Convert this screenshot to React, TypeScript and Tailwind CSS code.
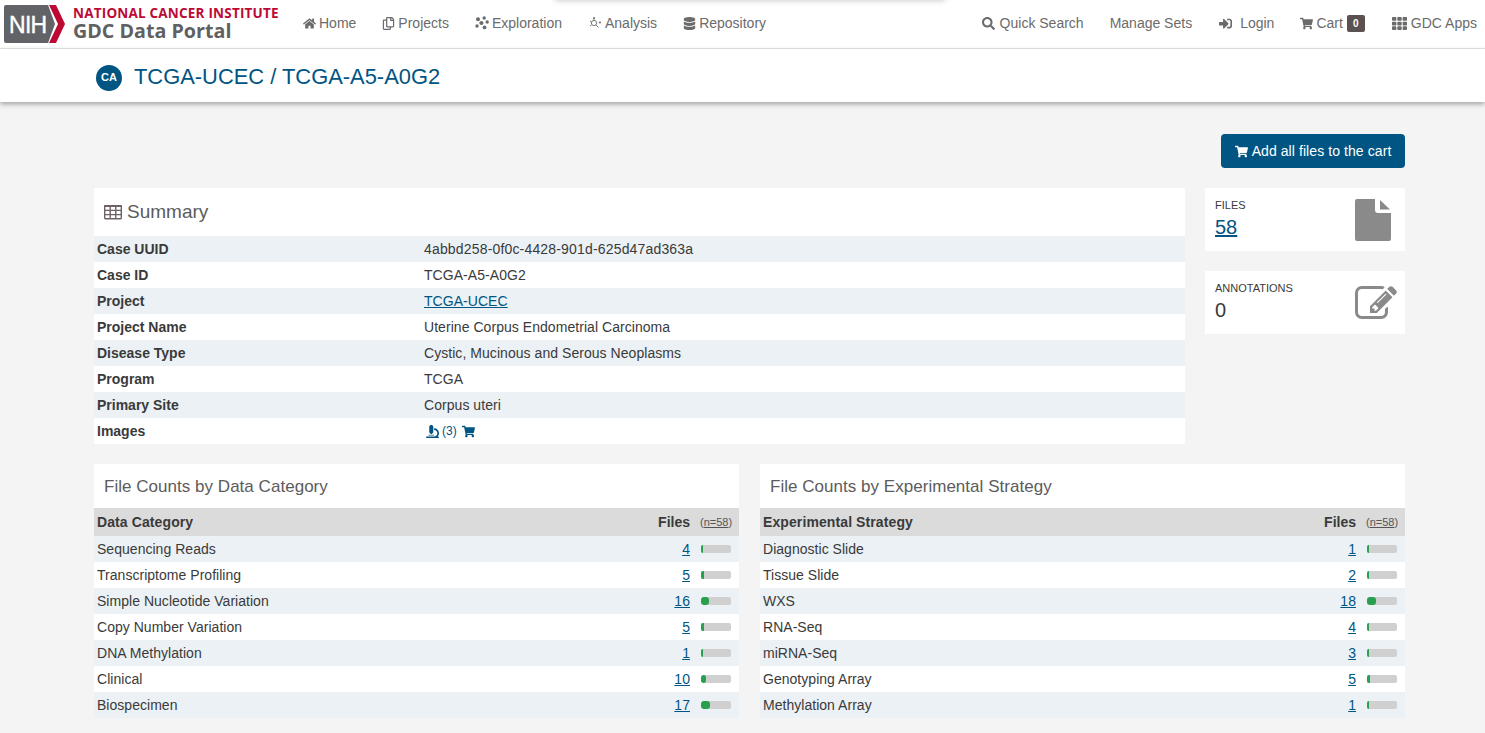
import React from "react";
import { FaHome, FaRegCopy, FaDatabase, FaSearch, FaSignInAlt, FaShoppingCart, FaTh, FaMicroscope } from "react-icons/fa";

const Logo = () => (
  <svg width="62" height="38" viewBox="0 0 62 38" className="shrink-0">
    <path d="M2 0H44L51 19L44 38H2Q0 38 0 36V2Q0 0 2 0Z" fill="#626366" />
    <path d="M45 0H52L61 19L52 38H45L54 19Z" fill="#bc0a35" />
    <text x="5" y="28" fill="#fff" stroke="#fff" strokeWidth="0.4" fontSize="23" fontFamily="'Liberation Sans',sans-serif" letterSpacing="-0.7">NIH</text>
  </svg>
);

const ExploreIcon = () => (
  <svg width="14" height="14" viewBox="0 0 14 14" fill="currentColor">
    <circle cx="3" cy="3.2" r="2" /><circle cx="9.2" cy="2" r="1.7" /><circle cx="6.4" cy="7" r="2.1" /><circle cx="12.2" cy="6" r="1.7" /><circle cx="2" cy="10" r="1.7" /><circle cx="9.5" cy="11.4" r="1.9" />
  </svg>
);

const AnalysisIcon = () => (
  <svg width="12" height="12" viewBox="0 0 12 12" fill="none" stroke="currentColor" strokeWidth="0.9">
    <circle cx="5" cy="6" r="2.6" /><path d="M7 8l2.5 2.5M5 1v2M1 4l1.5 1M1 9l1.5-1" /><circle cx="11" cy="5.5" r="0.7" fill="currentColor" /><circle cx="5" cy="1" r="0.6" fill="currentColor" />
  </svg>
);

const TableIcon = () => (
  <svg width="18" height="15" viewBox="64 224 1664 1344" fill="currentColor" className="shrink-0">
    <path d="M576 1376v-192q0-14-9-23t-23-9h-320q-14 0-23 9t-9 23v192q0 14 9 23t23 9h320q14 0 23-9t9-23zm0-384v-193q0-14-9-23t-23-9h-320q-14 0-23 9t-9 23v193q0 14 9 23t23 9h320q14 0 23-9t9-23zm512 384v-192q0-14-9-23t-23-9h-320q-14 0-23 9t-9 23v192q0 14 9 23t23 9h320q14 0 23-9t9-23zm-512-768v-192q0-14-9-23t-23-9h-320q-14 0-23 9t-9 23v192q0 14 9 23t23 9h320q14 0 23-9t9-23zm512 384v-193q0-14-9-23t-23-9h-320q-14 0-23 9t-9 23v193q0 14 9 23t23 9h320q14 0 23-9t9-23zm512 384v-192q0-14-9-23t-23-9h-320q-14 0-23 9t-9 23v192q0 14 9 23t23 9h320q14 0 23-9t9-23zm-512-768v-192q0-14-9-23t-23-9h-320q-14 0-23 9t-9 23v192q0 14 9 23t23 9h320q14 0 23-9t9-23zm512 384v-193q0-14-9-23t-23-9h-320q-14 0-23 9t-9 23v193q0 14 9 23t23 9h320q14 0 23-9t9-23zm0-384v-192q0-14-9-23t-23-9h-320q-14 0-23 9t-9 23v192q0 14 9 23t23 9h320q14 0 23-9t9-23zm128-320v1088q0 66-47 113t-113 47h-1344q-66 0-113-47t-47-113v-1088q0-66 47-113t113-47h1344q66 0 113 47t47 113z" />
  </svg>
);

const FileIcon = () => (
  <svg width="36" height="42" viewBox="0 0 36 42" fill="#8a8a8a" className="shrink-0">
    <path d="M2 0H20V11Q20 14 23 14H36V40Q36 42 34 42H2Q0 42 0 40V2Q0 0 2 0Z" />
    <path d="M25 1L35 10.5H25Z" />
  </svg>
);

const EditIcon = () => (
  <svg width="42" height="33" viewBox="0 128 1792 1408" fill="#8a8a8a" className="shrink-0">
    <path d="M888 1184l116-116-152-152-116 116v56h96v96h56zm440-720q-16-16-33 1l-350 350q-17 17-1 33t33-1l350-350q17-17 1-33zm80 594v190q0 119-84.5 203.5t-203.5 84.5h-832q-119 0-203.5-84.5t-84.5-203.5v-832q0-119 84.5-203.5t203.5-84.5h832q63 0 117 25 15 7 18 23 3 17-9 29l-49 49q-14 14-32 8-23-6-45-6h-832q-66 0-113 47t-47 113v832q0 66 47 113t113 47h832q66 0 113-47t47-113v-126q0-13 9-22l64-64q15-15 35-7t20 29zm-96-738l288 288-672 672h-288v-288zm444 132l-92 92-288-288 92-92q28-28 68-28t68 28l152 152q28 28 28 68t-28 68z" />
  </svg>
);

const NavItem = ({ icon, label, gap = "gap-[3px]", className = "", children }: { icon?: React.ReactNode; label: string; gap?: string; className?: string; children?: React.ReactNode }) => (
  <div className={`flex items-center px-[13px] text-[14px] text-[#6b6b6b] ${gap} ${className}`}>
    {icon}
    <span>{label}</span>
    {children}
  </div>
);

const summary: [string, React.ReactNode][] = [
  ["Case UUID", <span className="tracking-[0.17px]">4abbd258-0f0c-4428-901d-625d47ad363a</span>],
  ["Case ID", "TCGA-A5-A0G2"],
  ["Project", <a className="text-[#005583] underline">TCGA-UCEC</a>],
  ["Project Name", "Uterine Corpus Endometrial Carcinoma"],
  ["Disease Type", "Cystic, Mucinous and Serous Neoplasms"],
  ["Program", "TCGA"],
  ["Primary Site", "Corpus uteri"],
  [
    "Images",
    <span className="flex items-center text-[#005583]">
      <FaMicroscope className="text-[13px] ml-[2px]" />
      <span className="ml-[3px] text-[12px]">(3)</span>
      <FaShoppingCart className="text-[13px] ml-[5px]" />
    </span>,
  ],
];

const categories: [string, number][] = [
  ["Sequencing Reads", 4],
  ["Transcriptome Profiling", 5],
  ["Simple Nucleotide Variation", 16],
  ["Copy Number Variation", 5],
  ["DNA Methylation", 1],
  ["Clinical", 10],
  ["Biospecimen", 17],
];

const strategies: [string, number][] = [
  ["Diagnostic Slide", 1],
  ["Tissue Slide", 2],
  ["WXS", 18],
  ["RNA-Seq", 4],
  ["miRNA-Seq", 3],
  ["Genotyping Array", 5],
  ["Methylation Array", 1],
];

const CountPanel = ({ title, head, rows }: { title: string; head: string; rows: [string, number][] }) => (
  <section className="flex-1 bg-white h-[254px]">
    <h2 className="h-[44px] pl-[10px] pt-[2px] flex items-center text-[17px] font-normal text-[#5c5c5c] tracking-[0.03px]">{title}</h2>
    <div className="h-[28px] bg-[#dbdbdb] flex items-center pl-[3px] pr-[6px] font-bold text-[14px] text-[#3a3a3a]">
      <span className="flex-1 tracking-[0.1px]">{head}</span>
      <span>Files</span>
      <span className="ml-[10px] w-[33px] text-[11px] font-normal text-[#555] whitespace-nowrap">(<span className="underline">n=58</span>)</span>
    </div>
    {rows.map(([name, n], i) => (
      <div key={name} className={`h-[26px] flex items-center pl-[3px] pr-[8px] text-[14px] text-[#3a3a3a] tracking-[0.03px] ${i % 2 === 0 ? "bg-[#ebf1f5]" : "bg-white"}`}>
        <span className="flex-1">{name}</span>
        <a className="text-[#005583] underline">{n}</a>
        <span className="ml-[11px] w-[30px] h-[8px] rounded-[2px] bg-[#d0d0d0] overflow-hidden">
          <span className={`block h-full bg-[#28a04f] ${n >= 10 ? "rounded-[3px]" : ""}`} style={{ width: Math.max(2, (n / 58) * 30) }} />
        </span>
      </div>
    ))}
  </section>
);

export default function App() {
  return (
    <div className="relative min-h-screen bg-[#f4f4f4] font-['Liberation_Sans',Arial,sans-serif]">
      <div className="absolute left-[555px] top-[-6px] w-[390px] h-[6px] shadow-[0_0_6px_rgba(0,0,0,0.25)]" />
      <header className="h-[49px] bg-white border-b border-[#e8e8e8] flex items-center pb-[2px]">
        <div className="flex items-center ml-[4px] w-[276px] shrink-0 mt-[2px]">
          <Logo />
          <div className="ml-[7px] flex flex-col">
            <span className="font-['Open_Sans',sans-serif] font-bold text-[13.5px] leading-[14px] text-[#bc0a35] whitespace-nowrap tracking-[0.2px]">NATIONAL CANCER INSTITUTE</span>
            <span className="font-['Open_Sans',sans-serif] font-bold text-[19.7px] leading-[22px] text-[#5f6062] whitespace-nowrap">GDC Data Portal</span>
          </div>
        </div>
        <nav className="flex items-center ml-[10px]">
          <NavItem icon={<FaHome className="text-[13px]" />} label="Home" />
          <NavItem icon={<FaRegCopy className="text-[13px]" />} label="Projects" />
          <NavItem icon={<ExploreIcon />} label="Exploration" />
          <NavItem icon={<AnalysisIcon />} label="Analysis" gap="gap-[4px]" className="ml-[1px]" />
          <NavItem icon={<FaDatabase className="text-[13px]" />} label="Repository" />
        </nav>
        <nav className="flex items-center ml-auto mr-[-5px]">
          <NavItem icon={<FaSearch className="text-[13px]" />} label="Quick Search" gap="gap-[5px]" />
          <NavItem label="Manage Sets" />
          <NavItem icon={<FaSignInAlt className="text-[13px]" />} label="Login" gap="gap-[8px]" className="ml-[1px]" />
          <NavItem icon={<FaShoppingCart className="text-[13px]" />} label="Cart">
            <span className="ml-[1px] mr-[1px] w-[18px] h-[17px] rounded-[2px] bg-[#5b5150] text-white text-[10px] font-bold flex items-center justify-center">0</span>
          </NavItem>
          <NavItem icon={<FaTh className="text-[15px]" />} label="GDC Apps" gap="gap-[4px]" />
        </nav>
      </header>

      <div className="h-[53px] bg-white shadow-[0_2px_5px_rgba(0,0,0,0.35)] flex items-center pl-[96px] pt-[4px]">
        <span className="w-[26px] h-[26px] rounded-full bg-[#005583] text-white text-[11px] font-bold flex items-center justify-center">CA</span>
        <h1 className="ml-[12px] text-[21.9px] font-normal text-[#005583]">TCGA-UCEC / TCGA-A5-A0G2</h1>
      </div>

      <main className="pl-[94px] pr-[80px] pt-[32px]">
        <div className="flex justify-end">
          <button className="h-[34px] w-[184px] rounded-[4px] bg-[#005583] text-white text-[14px] flex items-center justify-center gap-[4px]">
            <FaShoppingCart className="text-[13px]" />
            <span className="tracking-[0.08px]">Add all files to the cart</span>
          </button>
        </div>

        <div className="flex gap-[20px] mt-[20px]">
          <section className="flex-1 bg-white h-[256px]">
            <h2 className="h-[48px] pl-[10px] flex items-center gap-[5px] text-[19px] font-normal text-[#5c5c5c]">
              <span className="text-[#6e6266]"><TableIcon /></span>
              Summary
            </h2>
            {summary.map(([k, v], i) => (
              <div key={k} className={`h-[26px] flex items-center text-[14px] text-[#3a3a3a] tracking-[0.05px] ${i % 2 === 0 ? "bg-[#ebf1f5]" : "bg-white"}`}>
                <span className="w-[330px] pl-[3px] font-bold tracking-normal">{k}</span>
                {v}
              </div>
            ))}
          </section>

          <aside className="w-[200px] flex flex-col gap-[20px]">
            <div className="h-[63px] bg-white flex items-center justify-between pl-[10px] pr-[14px]">
              <div className="-mt-[2px]">
                <div className="text-[11px] leading-[14px] text-[#3a3a3a]">FILES</div>
                <a className="block mt-[3px] text-[20px] leading-[24px] text-[#005583] underline">58</a>
              </div>
              <FileIcon />
            </div>
            <div className="h-[63px] bg-white flex items-center justify-between pl-[10px] pr-[8px]">
              <div className="-mt-[2px]">
                <div className="text-[11px] leading-[14px] text-[#3a3a3a]">ANNOTATIONS</div>
                <div className="mt-[3px] text-[20px] leading-[24px] text-[#3a3a3a]">0</div>
              </div>
              <EditIcon />
            </div>
          </aside>
        </div>

        <div className="flex gap-[21px] mt-[20px]">
          <CountPanel title="File Counts by Data Category" head="Data Category" rows={categories} />
          <CountPanel title="File Counts by Experimental Strategy" head="Experimental Strategy" rows={strategies} />
        </div>
      </main>
    </div>
  );
}
